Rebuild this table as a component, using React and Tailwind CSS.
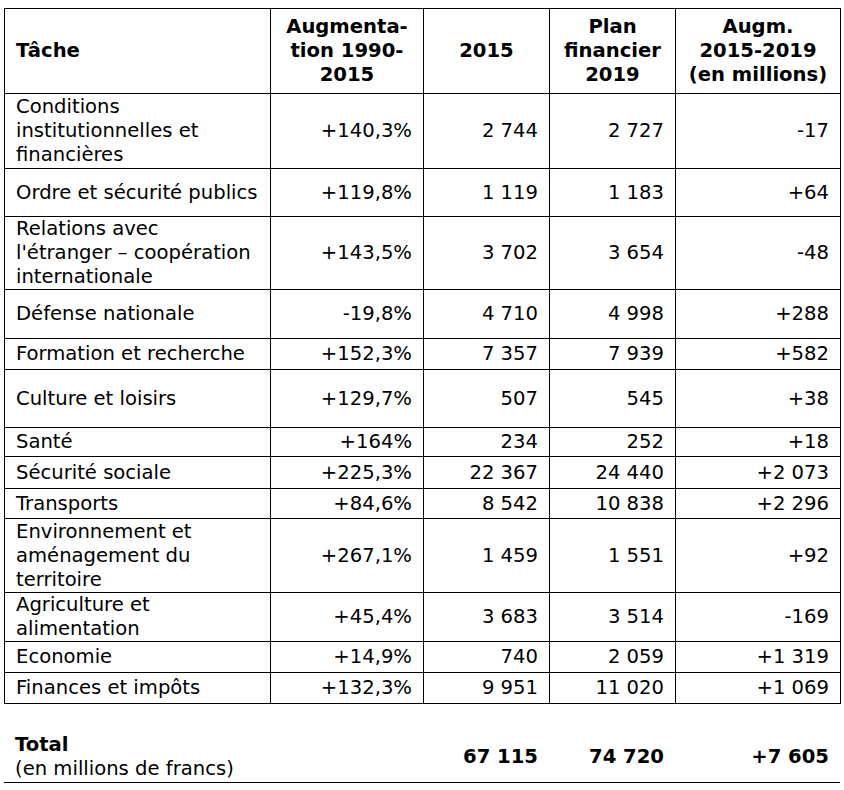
import React from "react";

const rows = [
  { t: ["Conditions", "institutionnelles et", "financières"], p: "+140,3%", a: "2 744", b: "2 727", d: "-17", h: "h-[75px]" },
  { t: ["Ordre et sécurité publics"], p: "+119,8%", a: "1 119", b: "1 183", d: "+64", h: "h-[48px]" },
  { t: ["Relations avec", "l'étranger – coopération", "internationale"], p: "+143,5%", a: "3 702", b: "3 654", d: "-48", h: "h-[73px]" },
  { t: ["Défense nationale"], p: "-19,8%", a: "4 710", b: "4 998", d: "+288", h: "h-[49px]" },
  { t: ["Formation et recherche"], p: "+152,3%", a: "7 357", b: "7 939", d: "+582", h: "h-[31px]" },
  { t: ["Culture et loisirs"], p: "+129,7%", a: "507", b: "545", d: "+38", h: "h-[58px]" },
  { t: ["Santé"], p: "+164%", a: "234", b: "252", d: "+18", h: "h-[29px]" },
  { t: ["Sécurité sociale"], p: "+225,3%", a: "22 367", b: "24 440", d: "+2 073", h: "h-[32px]" },
  { t: ["Transports"], p: "+84,6%", a: "8 542", b: "10 838", d: "+2 296", h: "h-[30px]" },
  { t: ["Environnement et", "aménagement du", "territoire"], p: "+267,1%", a: "1 459", b: "1 551", d: "+92", h: "h-[74px]" },
  { t: ["Agriculture et", "alimentation"], p: "+45,4%", a: "3 683", b: "3 514", d: "-169", h: "h-[48px]" },
  { t: ["Economie"], p: "+14,9%", a: "740", b: "2 059", d: "+1 319", h: "h-[31px]" },
  { t: ["Finances et impôts"], p: "+132,3%", a: "9 951", b: "11 020", d: "+1 069", h: "h-[31px]" },
];

const cell = "border border-black px-[11px] py-0 align-middle";

export default function App() {
  return (
    <div className="w-[844px] h-[790px] bg-white text-black text-[19.6px] leading-[24px] font-['DejaVu_Sans',Verdana,sans-serif] pt-[8px] pl-[4px]">
      <table className="table-fixed border-collapse w-[836px]">
        <colgroup>
          <col className="w-[266px]" />
          <col className="w-[153px]" />
          <col className="w-[126px]" />
          <col className="w-[126px]" />
          <col className="w-[165px]" />
        </colgroup>
        <thead>
          <tr className="h-[85px] font-bold">
            <th className={`${cell} text-left`}>Tâche</th>
            <th className={`${cell} text-center`}>Augmenta-<br />tion 1990-<br />2015</th>
            <th className={`${cell} text-center`}>2015</th>
            <th className={`${cell} text-center`}>Plan<br />financier<br />2019</th>
            <th className={`${cell} text-center`}>Augm.<br />2015-2019<br />(en millions)</th>
          </tr>
        </thead>
        <tbody>
          {rows.map((r) => (
            <tr key={r.t[0]} className={r.h}>
              <td className={`${cell} text-left whitespace-nowrap`}>
                {r.t.map((line, i) => (
                  <div key={i}>{line}</div>
                ))}
              </td>
              <td className={`${cell} text-right whitespace-nowrap`}>{r.p}</td>
              <td className={`${cell} text-right whitespace-nowrap`}>{r.a}</td>
              <td className={`${cell} text-right whitespace-nowrap`}>{r.b}</td>
              <td className={`${cell} text-right whitespace-nowrap`}>{r.d}</td>
            </tr>
          ))}
        </tbody>
      </table>

      <div className="w-[836px] mt-[29px] grid grid-cols-[266px_153px_126px_126px_165px] items-center border-b border-black pb-[1px]">
        <div className="px-[11px]">
          <div className="font-bold">Total</div>
          <div>(en millions de francs)</div>
        </div>
        <div />
        <div className="px-[11px] text-right font-bold">67 115</div>
        <div className="px-[11px] text-right font-bold">74 720</div>
        <div className="px-[11px] text-right font-bold">+7 605</div>
      </div>
    </div>
  );
}
